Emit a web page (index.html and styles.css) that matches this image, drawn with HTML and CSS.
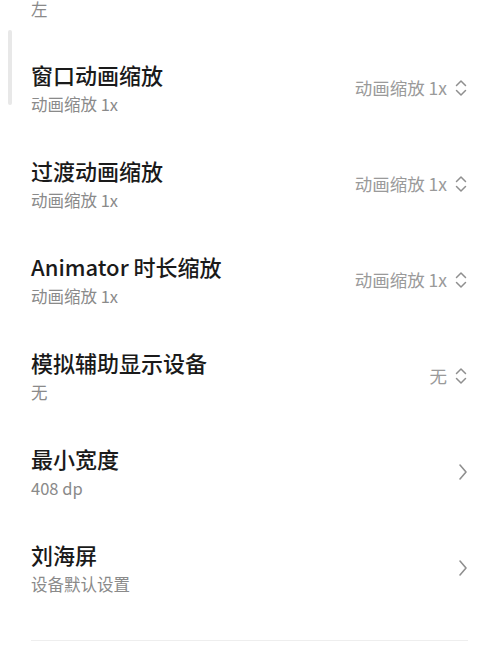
FILE: index.html
```html
<!DOCTYPE html>
<html lang="zh">
<head>
<meta charset="utf-8">
<link rel="stylesheet" href="styles.css">
</head>
<body>
<div class="scrollbar"></div>
<div class="list">
  <div class="row partial">
    <div class="sub">左</div>
  </div>
  <div class="row">
    <div class="text"><div class="title">窗口动画缩放</div><div class="sub">动画缩放 1x</div></div>
    <div class="value">动画缩放 1x<svg class="updown" viewBox="0 0 14 18"><path d="M2.5 6.5 L7 2 L11.5 6.5 M2.5 11.5 L7 16 L11.5 11.5"/></svg></div>
  </div>
  <div class="row">
    <div class="text"><div class="title">过渡动画缩放</div><div class="sub">动画缩放 1x</div></div>
    <div class="value">动画缩放 1x<svg class="updown" viewBox="0 0 14 18"><path d="M2.5 6.5 L7 2 L11.5 6.5 M2.5 11.5 L7 16 L11.5 11.5"/></svg></div>
  </div>
  <div class="row">
    <div class="text"><div class="title">Animator 时长缩放</div><div class="sub">动画缩放 1x</div></div>
    <div class="value">动画缩放 1x<svg class="updown" viewBox="0 0 14 18"><path d="M2.5 6.5 L7 2 L11.5 6.5 M2.5 11.5 L7 16 L11.5 11.5"/></svg></div>
  </div>
  <div class="row">
    <div class="text"><div class="title">模拟辅助显示设备</div><div class="sub">无</div></div>
    <div class="value">无<svg class="updown" viewBox="0 0 14 18"><path d="M2.5 6.5 L7 2 L11.5 6.5 M2.5 11.5 L7 16 L11.5 11.5"/></svg></div>
  </div>
  <div class="row">
    <div class="text"><div class="title">最小宽度</div><div class="sub">408 dp</div></div>
    <div class="value"><svg class="arrow" viewBox="0 0 10 18"><path d="M2 2 L8 9 L2 16"/></svg></div>
  </div>
  <div class="row">
    <div class="text"><div class="title">刘海屏</div><div class="sub">设备默认设置</div></div>
    <div class="value"><svg class="arrow" viewBox="0 0 10 18"><path d="M2 2 L8 9 L2 16"/></svg></div>
  </div>
  <div class="divider"></div>
</div>
</body>
</html>
```
FILE: styles.css
```css
html, body {
  margin: 0;
  padding: 0;
  background: #ffffff;
  overflow: hidden;
}
body {
  width: 500px;
  height: 652px;
  font-family: "Noto Sans CJK SC", "Noto Sans", sans-serif;
  position: relative;
}
.scrollbar {
  position: absolute;
  left: 8px;
  top: 30px;
  width: 4px;
  height: 75px;
  border-radius: 2px;
  background: #e8e8e8;
}
.list {
  padding: 0 32px 0 31px;
}
.row {
  height: 96px;
  display: flex;
  align-items: center;
  justify-content: space-between;
}
.row.partial {
  height: 41px;
  align-items: flex-start;
}
.row.partial .sub {
  margin-top: 0;
  line-height: 18px;
}
.text {
  display: flex;
  flex-direction: column;
  margin-bottom: 3px;
}
.title {
  font-size: 22px;
  line-height: 28px;
  font-weight: 500;
  color: #1a1a1a;
}
.sub {
  font-size: 16.5px;
  line-height: 24px;
  margin-top: 4px;
  color: #8a8a8a;
}
.value {
  display: flex;
  align-items: center;
  font-size: 17.5px;
  color: #9a9a9a;
  margin-bottom: 3px;
}
.updown {
  width: 14px;
  height: 18px;
  margin-left: 7px;
  fill: none;
  stroke: #8f8f8f;
  stroke-width: 1.5;
  stroke-linecap: round;
  stroke-linejoin: round;
}
.arrow {
  width: 10px;
  height: 18px;
  fill: none;
  stroke: #8f8f8f;
  stroke-width: 1.6;
  stroke-linecap: round;
  stroke-linejoin: round;
}
.divider {
  height: 1px;
  background: #eeeeee;
  margin-top: 23px;
}
```
